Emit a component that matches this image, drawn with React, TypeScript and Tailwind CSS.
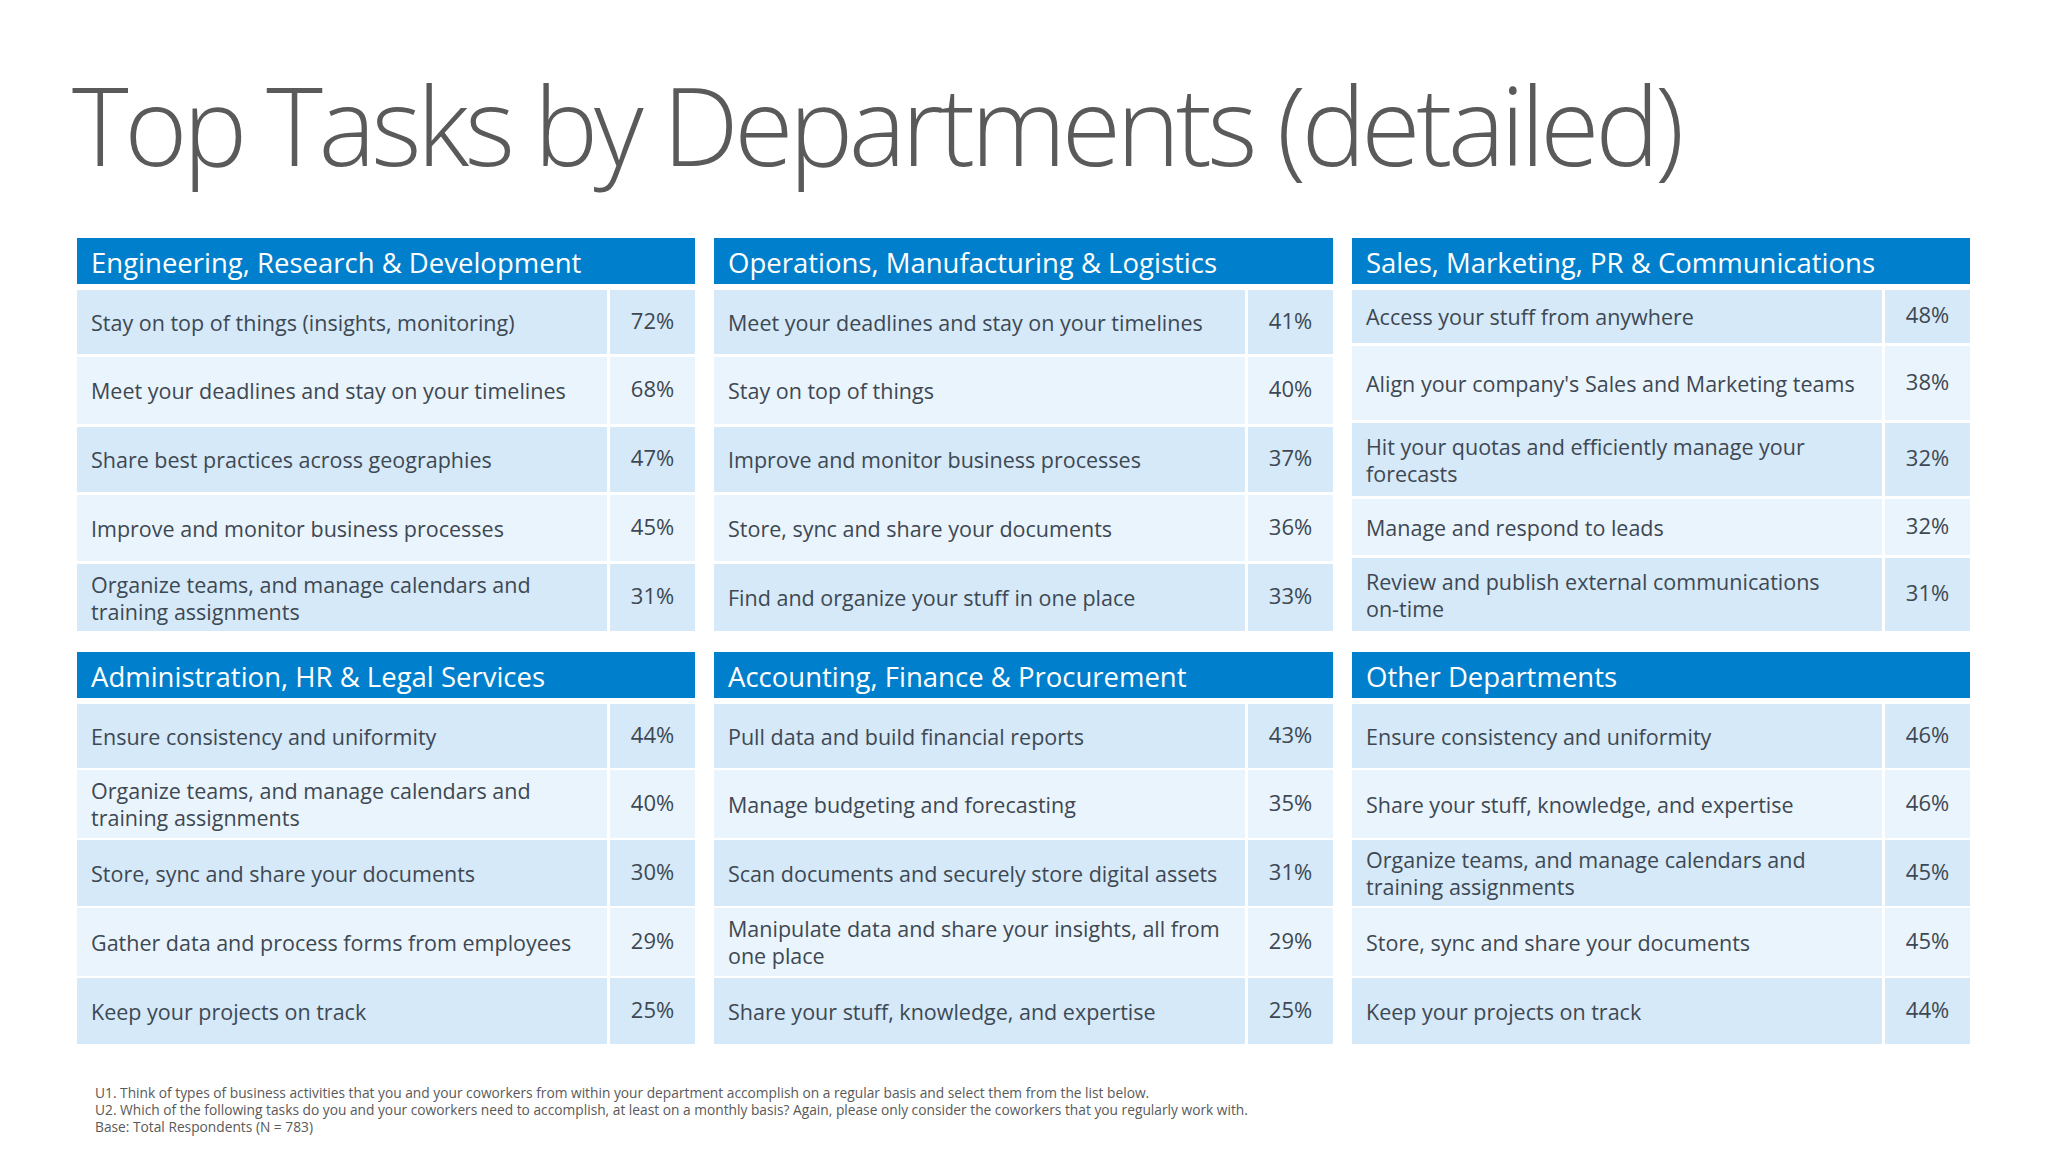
import React from "react"

type Task = { label: string; pct: string }

interface Department {
  title: string
  heights: number[]
  tasks: Task[]
}

const topHeights = [64, 67, 65, 66, 67]
const bottomHeights = [64, 68, 66, 68, 66]

const departments: Department[] = [
  {
    title: "Engineering, Research & Development",
    heights: topHeights,
    tasks: [
      { label: "Stay on top of things (insights, monitoring)", pct: "72%" },
      { label: "Meet your deadlines and stay on your timelines", pct: "68%" },
      { label: "Share best practices across geographies", pct: "47%" },
      { label: "Improve and monitor business processes", pct: "45%" },
      { label: "Organize teams, and manage calendars and\ntraining assignments", pct: "31%" },
    ],
  },
  {
    title: "Operations, Manufacturing & Logistics",
    heights: topHeights,
    tasks: [
      { label: "Meet your deadlines and stay on your timelines", pct: "41%" },
      { label: "Stay on top of things", pct: "40%" },
      { label: "Improve and monitor business processes", pct: "37%" },
      { label: "Store, sync and share your documents", pct: "36%" },
      { label: "Find and organize your stuff in one place", pct: "33%" },
    ],
  },
  {
    title: "Sales, Marketing, PR & Communications",
    heights: [53, 74, 73, 56, 73],
    tasks: [
      { label: "Access your stuff from anywhere", pct: "48%" },
      { label: "Align your company's Sales and Marketing teams", pct: "38%" },
      { label: "Hit your quotas and efficiently manage your\nforecasts", pct: "32%" },
      { label: "Manage and respond to leads", pct: "32%" },
      { label: "Review and publish external communications\non-time", pct: "31%" },
    ],
  },
  {
    title: "Administration, HR & Legal Services",
    heights: bottomHeights,
    tasks: [
      { label: "Ensure consistency and uniformity", pct: "44%" },
      { label: "Organize teams, and manage calendars and\ntraining assignments", pct: "40%" },
      { label: "Store, sync and share your documents", pct: "30%" },
      { label: "Gather data and process forms from employees", pct: "29%" },
      { label: "Keep your projects on track", pct: "25%" },
    ],
  },
  {
    title: "Accounting, Finance & Procurement",
    heights: bottomHeights,
    tasks: [
      { label: "Pull data and build financial reports", pct: "43%" },
      { label: "Manage budgeting and forecasting", pct: "35%" },
      { label: "Scan documents and securely store digital assets", pct: "31%" },
      { label: "Manipulate data and share your insights, all from\none place", pct: "29%" },
      { label: "Share your stuff, knowledge, and expertise", pct: "25%" },
    ],
  },
  {
    title: "Other Departments",
    heights: bottomHeights,
    tasks: [
      { label: "Ensure consistency and uniformity", pct: "46%" },
      { label: "Share your stuff, knowledge, and expertise", pct: "46%" },
      { label: "Organize teams, and manage calendars and\ntraining assignments", pct: "45%" },
      { label: "Store, sync and share your documents", pct: "45%" },
      { label: "Keep your projects on track", pct: "44%" },
    ],
  },
]

function DepartmentPanel({ dept, rowGap }: { dept: Department; rowGap: string }) {
  return (
    <div className="flex flex-col">
      <div className="h-[46px] bg-[#0080cc] flex items-center pl-[14px] pt-[3px] text-white text-[27.5px] leading-none">
        {dept.title}
      </div>
      <div className={`mt-[6px] flex flex-col ${rowGap}`}>
        {dept.tasks.map((t, i) => (
          <div
            key={t.label}
            className="flex gap-[3px]"
            style={{ height: dept.heights[i] }}
          >
            <div
              className={`flex-1 min-w-0 flex items-center pl-[14px] text-[21.5px] leading-[27px] text-[#3e4852] whitespace-pre overflow-hidden ${
                i % 2 === 0 ? "bg-[#d5e9f9]" : "bg-[#eaf4fd]"
              }`}
            >
              {t.label}
            </div>
            <div
              className={`w-[85px] flex items-center justify-center pb-[4px] text-[22px] text-[#3e4852] ${
                i % 2 === 0 ? "bg-[#d5e9f9]" : "bg-[#eaf4fd]"
              }`}
            >
              {t.pct}
            </div>
          </div>
        ))}
      </div>
    </div>
  )
}

export default function App() {
  return (
    <div className="w-[2048px] h-[1151px] bg-white overflow-hidden font-['Open_Sans',sans-serif]">
      <h1 className="pl-[72px] pt-[60px] text-[108px] leading-[130px] font-light text-[#5a5a5a] tracking-[-4.5px]">
        Top Tasks by Departments (detailed)
      </h1>
      <div className="mt-[48px] ml-[77px] grid grid-cols-[618px_619px_618px] gap-x-[19px] gap-y-[21px]">
        {departments.slice(0, 3).map((d) => (
          <DepartmentPanel key={d.title} dept={d} rowGap="gap-[3px]" />
        ))}
        {departments.slice(3).map((d) => (
          <DepartmentPanel key={d.title} dept={d} rowGap="gap-[2px]" />
        ))}
      </div>
      <div className="mt-[40px] ml-[95px] text-[13.75px] leading-[17px] text-[#595959]">
        <p>U1. Think of types of business activities that you and your coworkers from within your department accomplish on a regular basis and select them from the list below.</p>
        <p>U2. Which of the following tasks do you and your coworkers need to accomplish, at least on a monthly basis? Again, please only consider the coworkers that you regularly work with.</p>
        <p>Base: Total Respondents (N = 783)</p>
      </div>
    </div>
  )
}
